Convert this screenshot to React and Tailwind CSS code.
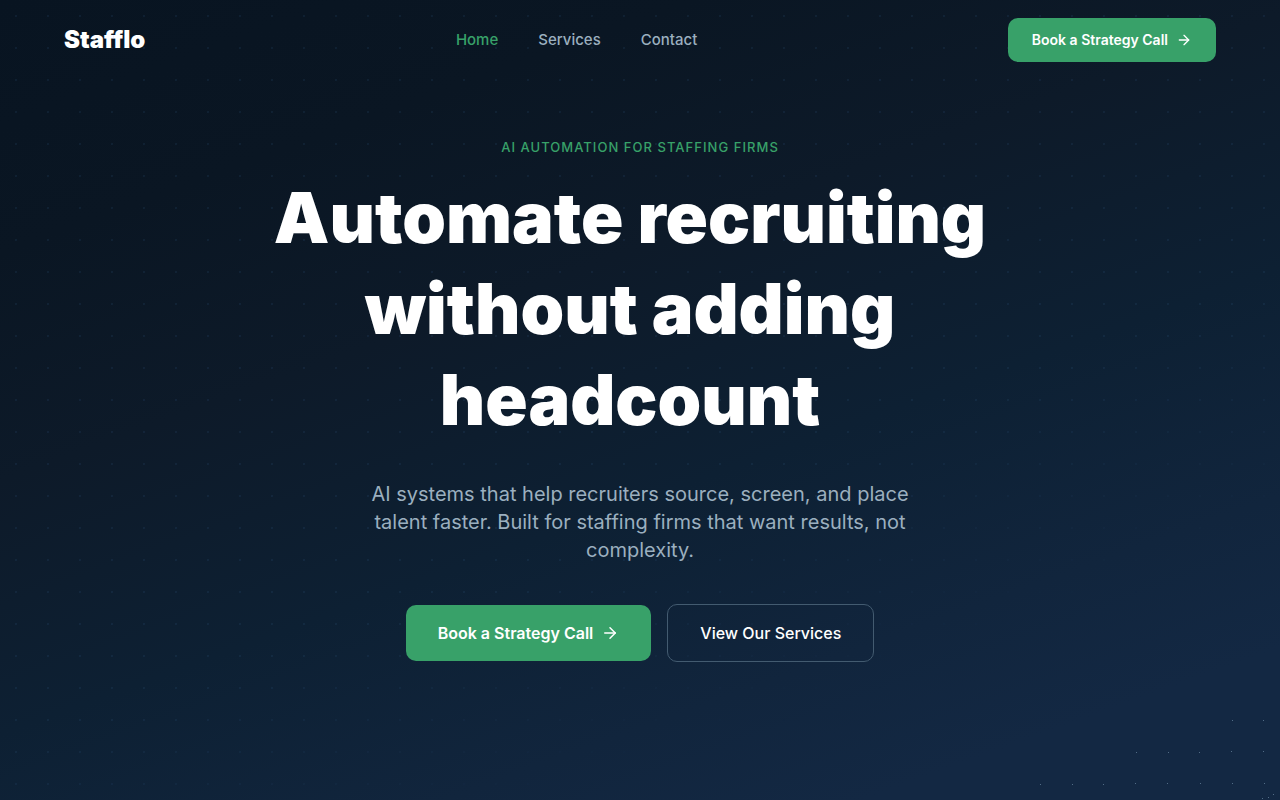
import { ArrowRight } from 'lucide-react';

const links = [
  { label: 'Home', active: true },
  { label: 'Services', active: false },
  { label: 'Contact', active: false },
];

const sparks = [
  [192, 0], [223, 0],
  [96, 32], [128, 32], [159, 32], [191, 31], [223, 31],
  [0, 64], [32, 64], [63, 64], [95, 63], [127, 63], [160, 63], [192, 63], [224, 63],
  [222, 78], [228, 77], [233, 74],
];

export default function App() {
  return (
    <div className="relative isolate flex min-h-screen flex-col overflow-hidden bg-[linear-gradient(160deg,#081421_0%,#0a1623_20%,#0d1a29_38%,#0d2033_58%,#11253d_76%,#132843_88%,#132843_100%)] font-['Inter',sans-serif] text-white">
      <div className="absolute inset-0 -z-10 bg-[radial-gradient(circle,rgba(65,115,165,0.12)_1px,transparent_1px)] bg-[size:32px_32px] [mask-image:linear-gradient(160deg,black_60%,transparent_80%)]" />
      <svg className="absolute right-0 bottom-0 -z-10 h-20 w-60" viewBox="0 0 240 80" aria-hidden="true">
        {sparks.map(([x, y]) => (
          <rect key={`${x}-${y}`} x={x} y={y} width="1" height="1" fill="#526d87" />
        ))}
      </svg>

      <header className="flex h-20 items-center justify-between px-16">
        <a href="#home" className="text-2xl leading-8 font-black">Stafflo</a>
        <nav className="flex gap-10 text-[15px] leading-6 font-medium text-[#9bafbf]">
          {links.map((link) => (
            <a key={link.label} href={`#${link.label.toLowerCase()}`} className={link.active ? 'text-[#38a169]' : ''}>
              {link.label}
            </a>
          ))}
        </nav>
        <a href="#call" className="flex h-11 items-center gap-2 rounded-[10px] bg-[#38a169] px-6 text-sm font-semibold">
          Book a Strategy Call
          <ArrowRight className="size-4" />
        </a>
      </header>

      <main className="flex flex-col items-center px-6 pt-14 text-center">
        <p className="text-[13px] leading-[22px] font-medium tracking-[0.08em] text-[#38a169] uppercase">
          AI automation for staffing firms
        </p>
        <h1 className="mt-[14px] pr-5 text-[70px] leading-[91px] font-black">
          Automate recruiting
          <br />
          without adding
          <br />
          headcount
        </h1>
        <p className="mt-[35px] max-w-[560px] text-xl leading-7 text-[#9bafbf]">
          AI systems that help recruiters source, screen, and place talent faster. Built for staffing firms that want
          results, not complexity.
        </p>
        <div className="mt-10 flex items-center gap-4">
          <a href="#call" className="flex h-14 items-center gap-2 rounded-[10px] bg-[#38a169] px-8 text-base font-semibold">
            Book a Strategy Call
            <ArrowRight className="size-[18px]" />
          </a>
          <a href="#services" className="flex h-[58px] items-center rounded-[10px] border border-[#435b70] px-8 text-base font-medium">
            View Our Services
          </a>
        </div>
      </main>
    </div>
  );
}
